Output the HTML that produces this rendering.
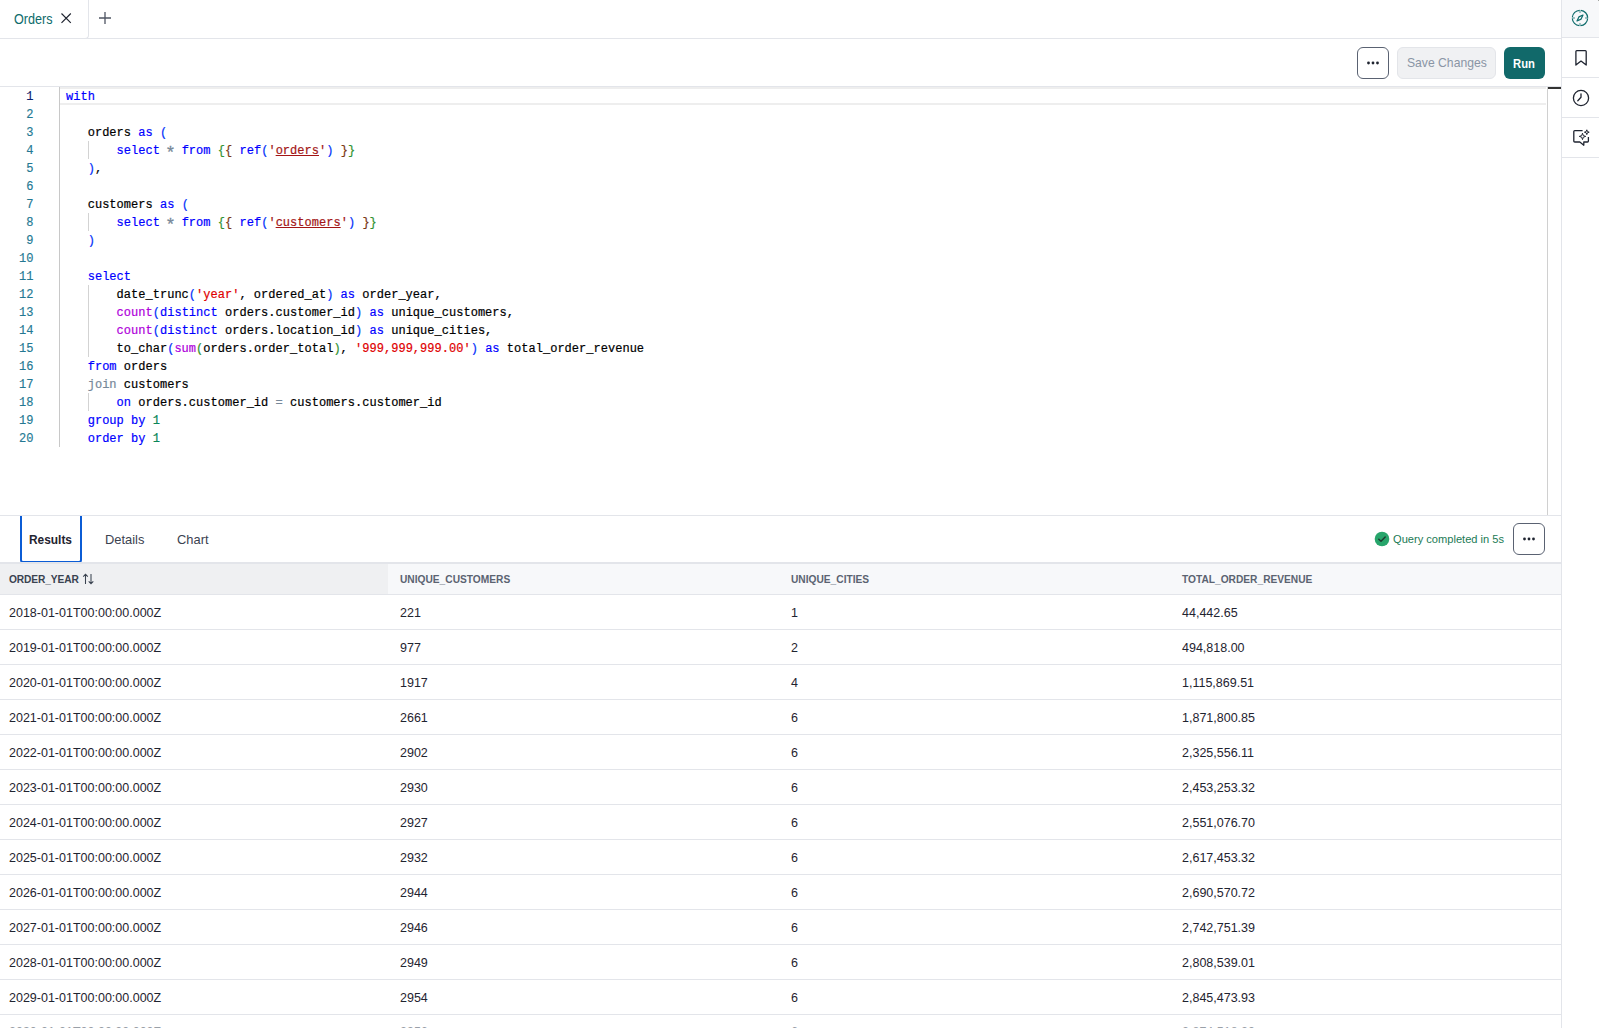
<!DOCTYPE html>
<html><head><meta charset="utf-8">
<style>
*{box-sizing:border-box;margin:0;padding:0}
html,body{width:1599px;height:1028px;overflow:hidden;background:#fff}
body{position:relative;font-family:"Liberation Sans",sans-serif;color:#1f2430}
.abs{position:absolute}
.hl{position:absolute;height:1px;background:#e3e5ea}
.vl{position:absolute;width:1px;background:#e3e5ea}
/* tab bar */
#tabtxt{left:13.5px;top:10px;font-size:14px;color:#0e6b6b;line-height:18px;white-space:nowrap;transform:scaleX(0.9);transform-origin:0 0}
/* toolbar */
.btn{position:absolute;top:47px;height:32px;border-radius:6px;white-space:nowrap}
#more1{left:1357px;width:32px;border:1px solid #5a6272;background:#fff}
#save{left:1397px;width:99px;background:#f0f1f3;border:1px solid #e3e5e9;color:#8a95a5;font-size:12.8px;line-height:30px;padding-left:8.5px}
#run{left:1504px;width:41px;background:#11696a;color:#fff;font-weight:bold;font-size:13.4px;line-height:33px;text-align:center}
/* editor */
#code{position:absolute;left:0;top:87px;width:1547px;height:428px;font-family:"Liberation Mono",monospace;font-size:12px}
.ln{position:absolute;left:0;width:33.5px;margin-top:1px;-webkit-text-stroke:0.15px currentColor;text-align:right;color:#237893;line-height:18px;height:18px}
.cl{position:absolute;left:66px;margin-top:1px;letter-spacing:0.024px;-webkit-text-stroke:0.2px currentColor;line-height:18px;height:18px;white-space:pre;color:#000}
.ast{display:inline-block;transform:translateY(3px) scale(1.45)}
.k{color:#0000ff}.f{color:#af00db}.s{color:#e00000}.sd{color:#a31515;text-decoration:underline}
.p{color:#0431fa}.g{color:#319331}.b{color:#7b3814}.o{color:#778899}.n{color:#098658}
.guide{position:absolute;width:1px;background:#d3d3d3}
.act{color:#0b216f}.sq{color:#a31515}
.curline{position:absolute;left:60px;top:0;width:1486px;height:18px;border-top:2px solid #eeeeee;border-bottom:2px solid #eeeeee}
.gutline{position:absolute;left:59px;top:0;width:1px;height:360px;background:#c8c8c8}
.ruler{position:absolute;left:1547px;top:87px;width:1px;height:428px;background:#d0d0d0}
/* results */
.rtab{position:absolute;top:516px;height:47px;line-height:47px;font-size:12.9px;color:#3b4250;white-space:nowrap}
.th{position:absolute;top:565px;height:30px;line-height:30px;font-size:10.2px;font-weight:bold;color:#5b6371;white-space:nowrap;padding-left:9px}
.row{position:absolute;left:0;width:1561px;height:35px;border-bottom:1px solid #e3e5ea}
.td{position:absolute;top:1px;line-height:34px;font-size:12.5px;color:#1f2430;white-space:nowrap}
</style></head><body>

<!-- tab bar -->
<div class="abs" id="tabtxt">Orders</div>
<svg class="abs" style="left:58px;top:10px" width="16" height="16" viewBox="0 0 16 16"><path d="M3.5 3.5L12.8 12.8M12.8 3.5L3.5 12.8" stroke="#1f2430" stroke-width="1.15" fill="none"/></svg>
<div class="vl" style="left:88px;top:0;height:35px"></div><div class="abs" style="left:84px;top:33px;width:5px;height:6px;border-right:1px solid #e3e5ea;border-bottom:1px solid #e3e5ea;border-bottom-right-radius:4px"></div>
<svg class="abs" style="left:97px;top:10px" width="16" height="16" viewBox="0 0 16 16"><path d="M8 2V14M2 8H14" stroke="#4f5563" stroke-width="1.3" fill="none"/></svg>
<div class="hl" style="left:0;top:38px;width:1561px"></div>

<!-- toolbar -->
<div class="btn" id="more1"><svg class="abs" style="left:7px;top:7px" width="16" height="16" viewBox="0 0 16 16"><circle cx="3.5" cy="8" r="1.4" fill="#1f2430"/><circle cx="8" cy="8" r="1.4" fill="#1f2430"/><circle cx="12.5" cy="8" r="1.4" fill="#1f2430"/></svg></div>
<div class="btn" id="save"><span style="display:inline-block;transform:scaleX(0.95);transform-origin:0 50%">Save Changes</span></div>
<div class="btn" id="run"><span style="display:inline-block;transform:scaleX(0.84)">Run</span></div>
<div class="hl" style="left:0;top:86px;width:1561px"></div>

<!-- editor -->
<div id="code">
<div class="curline"></div>
<div class="gutline"></div>
<div class="guide" style="left:88px;top:54px;height:18px"></div>
<div class="guide" style="left:88px;top:126px;height:18px"></div>
<div class="guide" style="left:88px;top:198px;height:18px"></div>
<div class="guide" style="left:88px;top:216px;height:18px"></div>
<div class="guide" style="left:88px;top:234px;height:18px"></div>
<div class="guide" style="left:88px;top:252px;height:18px"></div>
<div class="guide" style="left:88px;top:306px;height:18px"></div>
<div class="ln act" style="top:0px">1</div>
<div class="cl" style="top:0px"><span class="k">with</span></div>
<div class="ln" style="top:18px">2</div>
<div class="ln" style="top:36px">3</div>
<div class="cl" style="top:36px">   orders <span class="k">as</span> <span class="p">(</span></div>
<div class="ln" style="top:54px">4</div>
<div class="cl" style="top:54px">       <span class="k">select</span> <span class="o ast">*</span> <span class="k">from</span> <span class="g">{</span><span class="b">{</span> <span class="k">ref</span><span class="p">(</span><span class="sq">'</span><span class="sd">orders</span><span class="sq">'</span><span class="p">)</span> <span class="b">}</span><span class="g">}</span></div>
<div class="ln" style="top:72px">5</div>
<div class="cl" style="top:72px">   <span class="p">)</span>,</div>
<div class="ln" style="top:90px">6</div>
<div class="ln" style="top:108px">7</div>
<div class="cl" style="top:108px">   customers <span class="k">as</span> <span class="p">(</span></div>
<div class="ln" style="top:126px">8</div>
<div class="cl" style="top:126px">       <span class="k">select</span> <span class="o ast">*</span> <span class="k">from</span> <span class="g">{</span><span class="b">{</span> <span class="k">ref</span><span class="p">(</span><span class="sq">'</span><span class="sd">customers</span><span class="sq">'</span><span class="p">)</span> <span class="b">}</span><span class="g">}</span></div>
<div class="ln" style="top:144px">9</div>
<div class="cl" style="top:144px">   <span class="p">)</span></div>
<div class="ln" style="top:162px">10</div>
<div class="ln" style="top:180px">11</div>
<div class="cl" style="top:180px">   <span class="k">select</span></div>
<div class="ln" style="top:198px">12</div>
<div class="cl" style="top:198px">       date_trunc<span class="p">(</span><span class="s">'year'</span>, ordered_at<span class="p">)</span> <span class="k">as</span> order_year,</div>
<div class="ln" style="top:216px">13</div>
<div class="cl" style="top:216px">       <span class="f">count</span><span class="p">(</span><span class="k">distinct</span> orders.customer_id<span class="p">)</span> <span class="k">as</span> unique_customers,</div>
<div class="ln" style="top:234px">14</div>
<div class="cl" style="top:234px">       <span class="f">count</span><span class="p">(</span><span class="k">distinct</span> orders.location_id<span class="p">)</span> <span class="k">as</span> unique_cities,</div>
<div class="ln" style="top:252px">15</div>
<div class="cl" style="top:252px">       to_char<span class="p">(</span><span class="f">sum</span><span class="g">(</span>orders.order_total<span class="g">)</span>, <span class="s">'999,999,999.00'</span><span class="p">)</span> <span class="k">as</span> total_order_revenue</div>
<div class="ln" style="top:270px">16</div>
<div class="cl" style="top:270px">   <span class="k">from</span> orders</div>
<div class="ln" style="top:288px">17</div>
<div class="cl" style="top:288px">   <span class="o">join</span> customers</div>
<div class="ln" style="top:306px">18</div>
<div class="cl" style="top:306px">       <span class="k">on</span> orders.customer_id <span class="o">=</span> customers.customer_id</div>
<div class="ln" style="top:324px">19</div>
<div class="cl" style="top:324px">   <span class="k">group by</span> <span class="n">1</span></div>
<div class="ln" style="top:342px">20</div>
<div class="cl" style="top:342px">   <span class="k">order by</span> <span class="n">1</span></div>
</div>

<div class="ruler"></div>
<div class="abs" style="left:1548px;top:87px;width:13px;height:2px;background:#333"></div>

<!-- results -->
<div class="hl" style="left:0;top:515px;width:1561px"></div>
<div class="abs" style="left:0;top:516px;width:200px;height:47px;overflow:hidden"><div class="abs" style="left:20px;top:-3px;width:62px;height:50px;border:2px solid #0b5cd5;border-radius:3px"></div></div>
<div class="rtab" style="left:29px;top:517px;font-weight:bold;font-size:11.9px;color:#1f2430">Results</div>
<div class="rtab" style="left:105px">Details</div>
<div class="rtab" style="left:177px">Chart</div>
<svg class="abs" style="left:1374px;top:531px" width="16" height="16" viewBox="0 0 16 16"><circle cx="8" cy="8" r="7.3" fill="#27a56b"/><path d="M4.8 8.2L7 10.3L11.2 6" stroke="#1d3b30" stroke-width="1.5" fill="none" stroke-linecap="round" stroke-linejoin="round"/></svg>
<div class="abs" style="left:1393px;top:531px;font-size:11.1px;line-height:16px;color:#1a7a55;white-space:nowrap">Query completed in 5s</div>
<div class="abs" style="left:1513px;top:523px;width:32px;height:32px;border:1px solid #5a6272;border-radius:6px"><svg class="abs" style="left:7px;top:7px" width="16" height="16" viewBox="0 0 16 16"><circle cx="3.5" cy="8" r="1.4" fill="#1f2430"/><circle cx="8" cy="8" r="1.4" fill="#1f2430"/><circle cx="12.5" cy="8" r="1.4" fill="#1f2430"/></svg></div>
<div class="abs" style="left:0;top:562px;width:1561px;height:2px;background:#e3e5ea"></div>
<div class="abs" style="left:0;top:564px;width:1561px;height:30px;background:#f7f8fa"></div>
<div class="abs" style="left:0;top:564px;width:388px;height:30px;background:#eff0f2"></div>
<div class="hl" style="left:0;top:594px;width:1561px"></div>
<div class="th" style="left:0;color:#3a4350;letter-spacing:-0.1px">ORDER_YEAR</div>
<div class="th" style="left:391px">UNIQUE_CUSTOMERS</div>
<div class="th" style="left:782px">UNIQUE_CITIES</div>
<div class="th" style="left:1173px">TOTAL_ORDER_REVENUE</div>
<svg class="abs" style="left:82px;top:571px" width="14" height="16" viewBox="0 0 14 16"><path d="M3.5 13V3.3M1.2 5.6L3.5 3.3L5.8 5.6M9 3V12.7M6.7 10.4L9 12.7L11.3 10.4" stroke="#3a4350" stroke-width="1.05" fill="none"/></svg>
<div class="row" style="top:595px"><div class="td" style="left:9px">2018-01-01T00:00:00.000Z</div><div class="td" style="left:400px">221</div><div class="td" style="left:791px">1</div><div class="td" style="left:1182px">44,442.65</div></div>
<div class="row" style="top:630px"><div class="td" style="left:9px">2019-01-01T00:00:00.000Z</div><div class="td" style="left:400px">977</div><div class="td" style="left:791px">2</div><div class="td" style="left:1182px">494,818.00</div></div>
<div class="row" style="top:665px"><div class="td" style="left:9px">2020-01-01T00:00:00.000Z</div><div class="td" style="left:400px">1917</div><div class="td" style="left:791px">4</div><div class="td" style="left:1182px">1,115,869.51</div></div>
<div class="row" style="top:700px"><div class="td" style="left:9px">2021-01-01T00:00:00.000Z</div><div class="td" style="left:400px">2661</div><div class="td" style="left:791px">6</div><div class="td" style="left:1182px">1,871,800.85</div></div>
<div class="row" style="top:735px"><div class="td" style="left:9px">2022-01-01T00:00:00.000Z</div><div class="td" style="left:400px">2902</div><div class="td" style="left:791px">6</div><div class="td" style="left:1182px">2,325,556.11</div></div>
<div class="row" style="top:770px"><div class="td" style="left:9px">2023-01-01T00:00:00.000Z</div><div class="td" style="left:400px">2930</div><div class="td" style="left:791px">6</div><div class="td" style="left:1182px">2,453,253.32</div></div>
<div class="row" style="top:805px"><div class="td" style="left:9px">2024-01-01T00:00:00.000Z</div><div class="td" style="left:400px">2927</div><div class="td" style="left:791px">6</div><div class="td" style="left:1182px">2,551,076.70</div></div>
<div class="row" style="top:840px"><div class="td" style="left:9px">2025-01-01T00:00:00.000Z</div><div class="td" style="left:400px">2932</div><div class="td" style="left:791px">6</div><div class="td" style="left:1182px">2,617,453.32</div></div>
<div class="row" style="top:875px"><div class="td" style="left:9px">2026-01-01T00:00:00.000Z</div><div class="td" style="left:400px">2944</div><div class="td" style="left:791px">6</div><div class="td" style="left:1182px">2,690,570.72</div></div>
<div class="row" style="top:910px"><div class="td" style="left:9px">2027-01-01T00:00:00.000Z</div><div class="td" style="left:400px">2946</div><div class="td" style="left:791px">6</div><div class="td" style="left:1182px">2,742,751.39</div></div>
<div class="row" style="top:945px"><div class="td" style="left:9px">2028-01-01T00:00:00.000Z</div><div class="td" style="left:400px">2949</div><div class="td" style="left:791px">6</div><div class="td" style="left:1182px">2,808,539.01</div></div>
<div class="row" style="top:980px"><div class="td" style="left:9px">2029-01-01T00:00:00.000Z</div><div class="td" style="left:400px">2954</div><div class="td" style="left:791px">6</div><div class="td" style="left:1182px">2,845,473.93</div></div>
<div class="row" style="top:1015px"><div class="td" style="top:0;color:#9aa0a8;left:9px">2030-01-01T00:00:00.000Z</div><div class="td" style="top:0;color:#9aa0a8;left:400px">2956</div><div class="td" style="top:0;color:#9aa0a8;left:791px">6</div><div class="td" style="top:0;color:#9aa0a8;left:1182px">2,874,518.20</div></div>

<!-- sidebar -->
<div class="abs" style="left:1562px;top:0;width:37px;height:37px;background:#f7f8fa"></div>
<div class="vl" style="left:1561px;top:0;height:1028px"></div>
<div class="hl" style="left:1562px;top:37px;width:37px"></div>
<div class="hl" style="left:1562px;top:77px;width:37px"></div>
<div class="hl" style="left:1562px;top:117px;width:37px"></div>
<div class="hl" style="left:1562px;top:157px;width:37px"></div>
<svg class="abs" style="left:1562px;top:0" width="37" height="157" viewBox="1562 0 37 157">
<g fill="none" stroke="#0e6b6b" stroke-width="1.2">
<circle cx="1580" cy="18" r="7.7" stroke-dasharray="10.9 1.2" stroke-dashoffset="11.5"/>
<path d="M1580 10.3V12.9M1580 23.1V25.7M1572.3 18H1574.9M1585.1 18H1587.7" stroke-opacity="0.55" stroke-width="1.3"/>
<path d="M1583 15L1581.1 19.1L1577 21L1578.9 16.9Z" stroke-linejoin="round" stroke-width="1.2"/>
</g>
<g fill="none" stroke="#1f2430" stroke-width="1.3" stroke-linejoin="round">
<path d="M1575.9 65V51.5Q1575.9 50.6 1576.8 50.6H1585.3Q1586.2 50.6 1586.2 51.5V65L1581 61.1Z"/>
<circle cx="1581" cy="98" r="7.6"/>
<path d="M1581 93.8V97.2L1577.8 100.8" stroke-linecap="round"/>
<path d="M1582.6 130.6H1574.8Q1573.8 130.6 1573.8 131.6V141.2Q1573.8 142 1574.8 142H1579.8L1583.8 145.2V142H1587.4Q1588.4 142 1588.4 141V137"/>
<path d="M1582.5 133.20000000000002Q1582.5 136.4 1585.7 136.4Q1582.5 136.4 1582.5 139.6Q1582.5 136.4 1579.3 136.4Q1582.5 136.4 1582.5 133.20000000000002Z M1586.8 129.79999999999998Q1586.8 132.2 1589.2 132.2Q1586.8 132.2 1586.8 134.6Q1586.8 132.2 1584.3999999999999 132.2Q1586.8 132.2 1586.8 129.79999999999998Z" fill="none" stroke-width="1"/>

</g>
</svg>
<div class="abs" style="left:1598px;top:0;width:1px;height:1px;background:#a3a6a3"></div>
</body></html>
